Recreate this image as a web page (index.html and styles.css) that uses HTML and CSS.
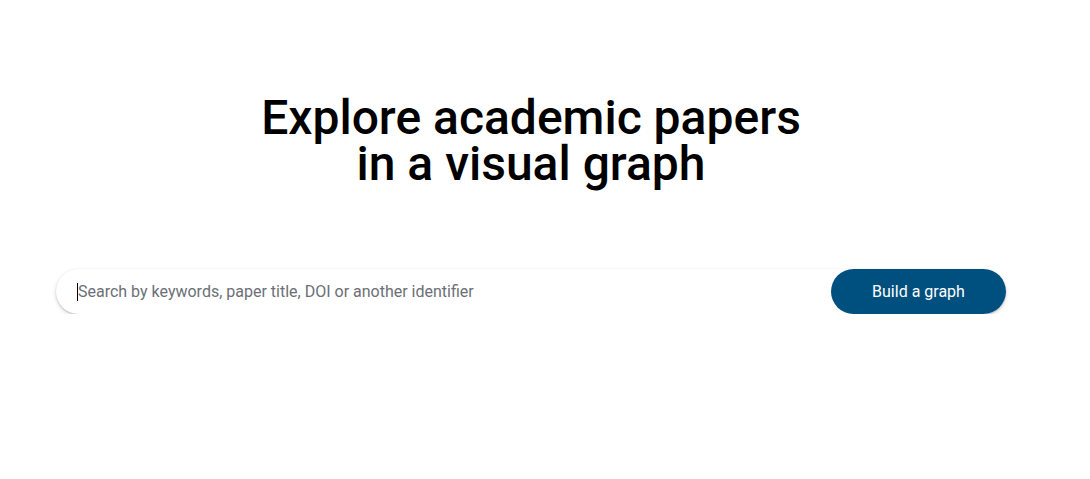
FILE: index.html
```html
<!DOCTYPE html>
<html>
<head>
<meta charset="utf-8">
<link rel="stylesheet" href="styles.css">
</head>
<body>
<main class="page">
  <h1 class="title">Explore academic papers<br>in a visual graph</h1>
  <form class="search">
    <div class="field"><span class="caret"></span><span class="placeholder">Search by keywords, paper title, DOI or another identifier</span></div>
    <button type="button" class="build">Build a graph</button>
  </form>
</main>
</body>
</html>
```

FILE: styles.css
```css
html, body {
  margin: 0;
  background: #fff;
  font-family: Roboto, "Liberation Sans", sans-serif;
}
.page {
  width: 1062px;
  display: flex;
  flex-direction: column;
  align-items: center;
  padding-top: 95px;
}
.title {
  margin: 0;
  font-size: 48px;
  font-weight: 500;
  line-height: 46px;
  text-align: center;
  color: #000;
}
.search {
  margin-top: 82px;
  width: 950px;
  height: 45px;
  box-sizing: border-box;
  display: flex;
  align-items: stretch;
  border-radius: 23px;
  background: #fff;
  box-shadow: 0 1px 2px rgba(0,0,0,0.18), 0 2px 5px rgba(0,0,0,0.12);
}
.field {
  flex: 1;
  display: flex;
  align-items: center;
  padding-left: 21px;
  font-size: 16px;
  color: #6b6f76;
}
.caret {
  width: 1px;
  height: 18px;
  background: #000;
}
.build {
  width: 175px;
  border: none;
  border-radius: 23px;
  background: #00507f;
  color: #fff;
  font-family: Roboto, "Liberation Sans", sans-serif;
  font-size: 16px;
  padding: 0;
}
```
